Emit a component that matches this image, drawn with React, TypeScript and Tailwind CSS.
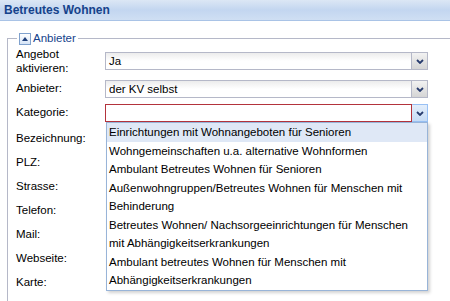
import React from 'react';

const items: string[][] = [
  ['Einrichtungen mit Wohnangeboten für Senioren'],
  ['Wohngemeinschaften u.a. alternative Wohnformen'],
  ['Ambulant Betreutes Wohnen für Senioren'],
  ['Außenwohngruppen/Betreutes Wohnen für Menschen mit', 'Behinderung'],
  ['Betreutes Wohnen/ Nachsorgeeinrichtungen für Menschen', 'mit Abhängigkeitserkrankungen'],
  ['Ambulant betreutes Wohnen für Menschen mit', 'Abhängigkeitserkrankungen'],
];

const labels = ['Bezeichnung:', 'PLZ:', 'Strasse:', 'Telefon:', 'Mail:', 'Webseite:', 'Karte:'];

function Chevron() {
  return (
    <svg width="8" height="5" viewBox="0 0 8 5">
      <polyline points="1,1 4,4 7,1" fill="none" stroke="#283c6e" strokeWidth="1.8" />
    </svg>
  );
}

function Combo({ value, invalid, active }: { value: string; invalid?: boolean; active?: boolean }) {
  return (
    <div className="flex h-[18px] w-[323px]">
      <div
        className={
          invalid
            ? 'flex-1 border border-[#b3333c] bg-white pl-[3px] leading-[16px]'
            : 'flex-1 border border-[#b5b8c8] bg-gradient-to-b from-[#ececec] via-white to-white pl-[3px] leading-[16px]'
        }
      >
        {value}
      </div>
      <div
        className={
          active
            ? 'flex w-[16px] items-center justify-center border border-l-0 border-[#98c0f4] bg-gradient-to-b from-[#e3eefb] to-[#c7dcf5]'
            : 'flex w-[16px] items-center justify-center border border-l-0 border-[#b5b8c8] bg-gradient-to-b from-[#f2f2f2] to-[#d5d5d5]'
        }
      >
        <Chevron />
      </div>
    </div>
  );
}

export default function App() {
  return (
    <div className="relative h-[301px] w-[450px] overflow-hidden bg-white font-['Liberation_Sans',Arial,sans-serif] text-[11.5px] text-black">
      <div className="h-[21px] border-b border-[#a9c3e6] bg-gradient-to-b from-[#dce7f5] via-[#c3d6f0] to-[#cfdff3] pl-[4px] text-[12px] font-bold leading-[20px] text-[#15428b]">
        Betreutes Wohnen
      </div>
      <div className="pl-[7px] pt-[11px]">
        {/* fieldset caption row */}
        <div className="flex h-[13px] items-center">
          <div className="h-[7px] w-[10px] self-end border-l border-t border-[#b5b8c8]" />
          <div className="flex items-center gap-[2px] px-[2px] leading-[13px] text-[#15428b]">
            <span className="flex h-[12px] w-[12px] items-center justify-center border border-[#7fa1cd] bg-gradient-to-b from-white to-[#d6e4f6]">
              <svg width="6" height="4" viewBox="0 0 6 4">
                <polygon points="0,4 3,0 6,4" fill="#1f3f7a" />
              </svg>
            </span>
            <span>Anbieter</span>
          </div>
          <div className="h-[7px] flex-1 self-end border-t border-[#b5b8c8]" />
        </div>

        <div className="h-[260px] border-l border-[#b5b8c8] pl-[8px] pt-[2px]">
          <div className="flex h-[28px] items-center">
            <div className="w-[89px] leading-[14px]">
              Angebot
              <br />
              aktivieren:
            </div>
            <Combo value="Ja" />
          </div>

          <div className="mt-[2px] flex h-[24px] items-center">
            <div className="w-[89px]">Anbieter:</div>
            <Combo value="der KV selbst" />
          </div>

          <div className="flex h-[24px] items-center">
            <div className="w-[89px]">Kategorie:</div>
            <div className="relative">
              <Combo value="" invalid active />
              <div className="absolute left-[1px] top-[18px] z-10 h-[169px] w-[322px] overflow-hidden border border-[#98b4d8] bg-white shadow-[2px_2px_3px_rgba(0,0,0,0.18)]">
                {items.map((lines, i) => (
                  <div
                    key={i}
                    className={
                      i === 0
                        ? 'bg-[#dfe8f6] pl-[2px] leading-[18.5px] whitespace-nowrap'
                        : 'pl-[2px] leading-[18.5px] whitespace-nowrap'
                    }
                  >
                    {lines.map((l, j) => (
                      <div key={j}>{l}</div>
                    ))}
                  </div>
                ))}
              </div>
            </div>
          </div>

          <div className="mt-[2px]">
            {labels.map((l) => (
              <div key={l} className="flex h-[24px] items-center">
                <div className="w-[89px]">{l}</div>
              </div>
            ))}
          </div>
        </div>
      </div>
    </div>
  );
}
